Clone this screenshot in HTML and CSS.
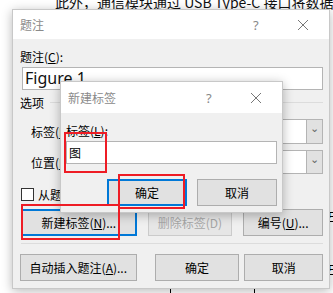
FILE: index.html
```html
<!DOCTYPE html>
<html lang="zh-CN">

<head>
    <meta charset="UTF-8">
    <title>题注</title>
    <link rel="stylesheet" href="styles.css">
</head>

<body>
    <div class="doc">
        <p class="doc-line top">此外，通信模块通过 USB Type-C 接口将数据</p>
        <p class="doc-edge e1">中</p>
        <p class="doc-edge e2">中</p>
        <span class="doc-mark m1"></span>
        <span class="doc-mark m2"></span>
    </div>

    <div class="dialog main">
        <div class="titlebar">
            <span class="title">题注</span>
            <span class="help">?</span>
            <svg class="close" width="12" height="12" viewBox="0 0 12 12">
                <path d="M1 1L11 11M11 1L1 11" stroke="#777" stroke-width="1" fill="none" />
            </svg>
        </div>
        <div class="body">
            <div class="label">题注(<u>C</u>):</div>
            <div class="field big">Figure 1</div>
            <div class="group">
                <span>选项</span>
                <i></i>
            </div>
            <div class="row">
                <span class="row-label">标签(<u>L</u>):</span>
                <div class="combo"><span class="combo-box"></span><span class="combo-btn">&#8964;</span></div>
            </div>
            <div class="row second">
                <span class="row-label">位置(<u>P</u>):</span>
                <div class="combo"><span class="combo-box"></span><span class="combo-btn">&#8964;</span></div>
            </div>
            <div class="check-row">
                <span class="check"></span>
                <span>从题注中排除标签(<u>E</u>)</span>
            </div>
            <div class="btn-row">
                <span class="btn focus w-new">新建标签(<u>N</u>)...</span>
                <span class="btn disabled w-del">删除标签(D)</span>
                <span class="btn w-num">编号(<u>U</u>)...</span>
            </div>
            <div class="sep"></div>
            <div class="btn-row bottom">
                <span class="btn w-auto">自动插入题注(<u>A</u>)...</span>
                <span class="btn w-ok">确定</span>
                <span class="btn w-cancel">取消</span>
            </div>
        </div>
    </div>

    <div class="dialog sub">
        <div class="titlebar">
            <span class="title">新建标签</span>
            <span class="help">?</span>
            <svg class="close" width="12" height="12" viewBox="0 0 12 12">
                <path d="M1 1L11 11M11 1L1 11" stroke="#777" stroke-width="1" fill="none" />
            </svg>
        </div>
        <div class="body">
            <div class="label">标签(<u>L</u>):</div>
            <div class="field">图</div>
            <div class="sub-btns">
                <span class="btn focus">确定</span>
                <span class="btn">取消</span>
            </div>
        </div>
    </div>

    <div class="mark r1"></div>
    <div class="mark r2"></div>
    <div class="mark r3"></div>
</body>

</html>
```

FILE: styles.css
```css
* {
    padding: 0;
    margin: 0;
    box-sizing: border-box;
}

body {
    width: 333px;
    height: 293px;
    overflow: hidden;
    background: #fff;
    position: relative;
    font-family: "Noto Sans CJK SC", "Noto Sans", sans-serif;
    font-size: 12px;
    color: #000;
}

u {
    text-decoration: underline;
    text-underline-offset: 1px;
}

.doc-line {
    font-family: "Noto Sans CJK SC", sans-serif;
    font-size: 14px;
    line-height: 14px;
    white-space: nowrap;
    padding-left: 55px;
    margin-top: -5px;
    color: #111;
}

.doc-edge {
    position: absolute;
    left: 328px;
    font-size: 13px;
    line-height: 14px;
    text-decoration: underline;
}

.e1 {
    top: 208px;
}

.e2 {
    top: 261px;
}

.doc-mark {
    position: absolute;
    top: 288px;
    width: 1px;
    height: 5px;
    background: #000;
}

.m1 {
    left: 170px;
}

.m2 {
    left: 254px;
}

.dialog {
    position: absolute;
    background: #f0f0f0;
    border: 1px solid #c8c8c8;
    box-shadow: 0 2px 10px rgba(0, 0, 0, .28);
}

.main {
    left: 12px;
    top: 9px;
    width: 318px;
    height: 280px;
}

.sub {
    left: 60px;
    top: 81px;
    width: 223px;
    height: 132px;
}

.titlebar {
    height: 29px;
    background: #fff;
    display: flex;
    align-items: center;
    padding-left: 7px;
    color: #8a8a8a;
    font-size: 12px;
}

.sub .titlebar {
    height: 31px;
}

.title {
    flex: 1;
}

.help {
    font-family: "Noto Sans", sans-serif;
    font-size: 13px;
    color: #888;
    width: 12px;
}

.close {
    margin: 0 20px 0 32px;
}

.main .body {
    padding: 0 6px 0 7px;
}

.label {
    height: 16px;
    line-height: 16px;
    margin-top: 10px;
    margin-bottom: 2px;
}

.field {
    height: 23px;
    background: #fff;
    border: 1px solid #b4b4b4;
    line-height: 21px;
    padding-left: 2px;
}

.main .field {
    margin-left: 2px;
}

.big {
    font-family: "Noto Sans", sans-serif;
    font-size: 16px;
    color: #111;
}

.group {
    display: flex;
    align-items: center;
    height: 16px;
    margin-top: 4px;
}

.group i {
    flex: 1;
    height: 1px;
    background: #dcdcdc;
    margin-left: 6px;
}

.row {
    display: flex;
    align-items: center;
    height: 25px;
    margin-top: 9px;
    padding-left: 11px;
}

.row.second {
    margin-top: 6px;
    height: 24px;
}

.row-label {
    width: 70px;
}

.combo {
    flex: 1;
    display: flex;
    height: 100%;
}

.combo-box {
    flex: 1;
    background: #fff;
    border: 1px solid #b4b4b4;
    border-right: none;
}

.combo-btn {
    width: 17px;
    background: #e1e1e1;
    border: 1px solid #b4b4b4;
    color: #666;
    font-size: 11px;
    line-height: 14px;
    text-align: center;
}

.check-row {
    display: flex;
    align-items: center;
    gap: 4px;
    height: 14px;
    margin-top: 13px;
    padding-left: 1px;
}

.check {
    width: 13px;
    height: 13px;
    background: #fff;
    border: 1px solid #333;
}

.btn-row {
    display: flex;
    height: 27px;
    margin-top: 8px;
}

.btn {
    display: flex;
    align-items: center;
    justify-content: center;
    height: 27px;
    background: #e1e1e1;
    border: 1px solid #adadad;
    white-space: nowrap;
}

.btn.focus {
    border: 2px solid #0078d7;
}

.btn.disabled {
    color: #a6a6a6;
    border-color: #cbcbcb;
    background: #e6e6e6;
}

.w-new {
    width: 116px;
    margin-left: 1px;
}

.w-del {
    width: 85px;
    margin-left: 11px;
}

.w-num {
    width: 80px;
    margin-left: 11px;
}

.sep {
    height: 1px;
    background: #dcdcdc;
    margin-top: 7px;
    margin-left: 1px;
}

.btn-row.bottom {
    margin-top: 10px;
}

.w-auto {
    width: 117px;
}

.w-ok {
    width: 85px;
    margin-left: 18px;
}

.w-cancel {
    width: 79px;
    margin-left: 5px;
}

.sub .body {
    padding: 0 5px 0 5px;
}

.sub-btns {
    display: flex;
    justify-content: flex-end;
    gap: 10px;
    margin-top: 15px;
}

.sub-btns .btn {
    width: 80px;
}

.mark {
    position: absolute;
    border: 2px solid #ee1c25;
}

.r1 {
    left: 64px;
    top: 132px;
    width: 43px;
    height: 41px;
}

.r2 {
    left: 118px;
    top: 174px;
    width: 67px;
    height: 35px;
}

.r3 {
    left: 21px;
    top: 204px;
    width: 99px;
    height: 36px;
}
```
